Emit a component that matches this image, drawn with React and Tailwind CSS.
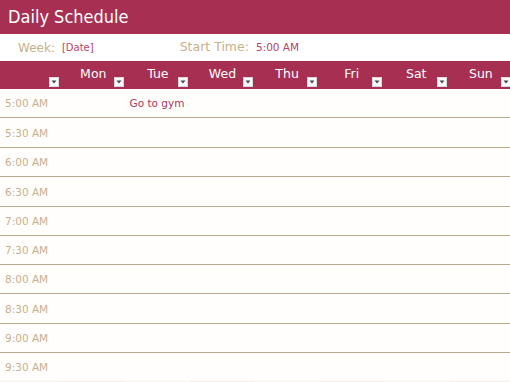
import React from "react";

const days = ["Mon", "Tue", "Wed", "Thu", "Fri", "Sat", "Sun"];
const times = [
  "5:00 AM",
  "5:30 AM",
  "6:00 AM",
  "6:30 AM",
  "7:00 AM",
  "7:30 AM",
  "8:00 AM",
  "8:30 AM",
  "9:00 AM",
  "9:30 AM",
];
const rowHeights = [
  "h-[29px]",
  "h-[30px]",
  "h-[29px]",
  "h-[30px]",
  "h-[29px]",
  "h-[29px]",
  "h-[29px]",
  "h-[30px]",
  "h-[29px]",
  "h-[28px]",
];

function Drop() {
  return (
    <div className="absolute right-[2px] bottom-[2px] w-[10px] h-[10px] bg-white border border-[#d8d8d8] flex items-center justify-center">
      <svg width="6" height="4" viewBox="0 0 6 4">
        <path d="M0.5 0.5 L5.5 0.5 L3 3.5 Z" fill="#444" />
      </svg>
    </div>
  );
}

export default function App() {
  return (
    <div
      className="w-[510px] h-[382px] overflow-hidden bg-white"
      style={{ fontFamily: '"DejaVu Sans", Verdana, sans-serif' }}
    >
      <div className="h-[34px] bg-[#A62F52] flex items-center pl-[8px]">
        <span
          className="text-white text-[18px] leading-none"
          style={{ fontFamily: '"DejaVu Sans Condensed", "DejaVu Sans", sans-serif', fontStretch: "condensed" }}
        >
          Daily Schedule
        </span>
      </div>
      <div className="h-[27px] flex items-center bg-white">
        <span className="ml-[18px] text-[12px] text-[#C9B08C]">Week:</span>
        <span className="ml-[7px] text-[10px] text-[#B8436C]">[Date]</span>
        <span className="ml-[86px] text-[12.5px] text-[#C9B08C]">Start Time:</span>
        <span className="ml-[7px] text-[10.5px] text-[#B8436C]">5:00 AM</span>
      </div>
      <div className="w-[513px]">
        <div className="grid grid-cols-[61px_repeat(7,64.6px)] h-[28px] bg-[#A62F52]">
          <div className="relative">
            <Drop />
          </div>
          {days.map((d) => (
            <div key={d} className="relative flex items-center justify-center">
              <span className="text-white text-[12.5px] leading-none -mt-[1px]">{d}</span>
              <Drop />
            </div>
          ))}
        </div>
        {times.map((t, i) => (
          <div
            key={t}
            className={`grid grid-cols-[61px_repeat(7,64.6px)] ${rowHeights[i]} bg-[#FFFEFC] ${i < 9 ? "border-b border-[#BBA98D]" : ""}`}
          >
            <div className="flex items-center pl-[5px] pt-[2px] text-[10.5px] text-[#C9B08C]">{t}</div>
            {days.map((d) => (
              <div key={d} className="flex items-center pl-[4px] pt-[1px] text-[10.5px] text-[#A8385E]">
                {i === 0 && d === "Tue" ? "Go to gym" : ""}
              </div>
            ))}
          </div>
        ))}
        <div className="grid grid-cols-[61px_repeat(7,64.6px)] h-[10px]">
          <div className="bg-[#F4F0EA]" />
          <div className="bg-[#F3EFE8]" />
          <div className="bg-[#F7F3EE]" />
          <div className="bg-[#F3EFE8]" />
          <div className="bg-[#F7F3EE]" />
          <div className="bg-[#F3EFE8]" />
          <div className="bg-[#F7F3EE]" />
          <div className="bg-[#F3EFE8]" />
        </div>
      </div>
    </div>
  );
}
